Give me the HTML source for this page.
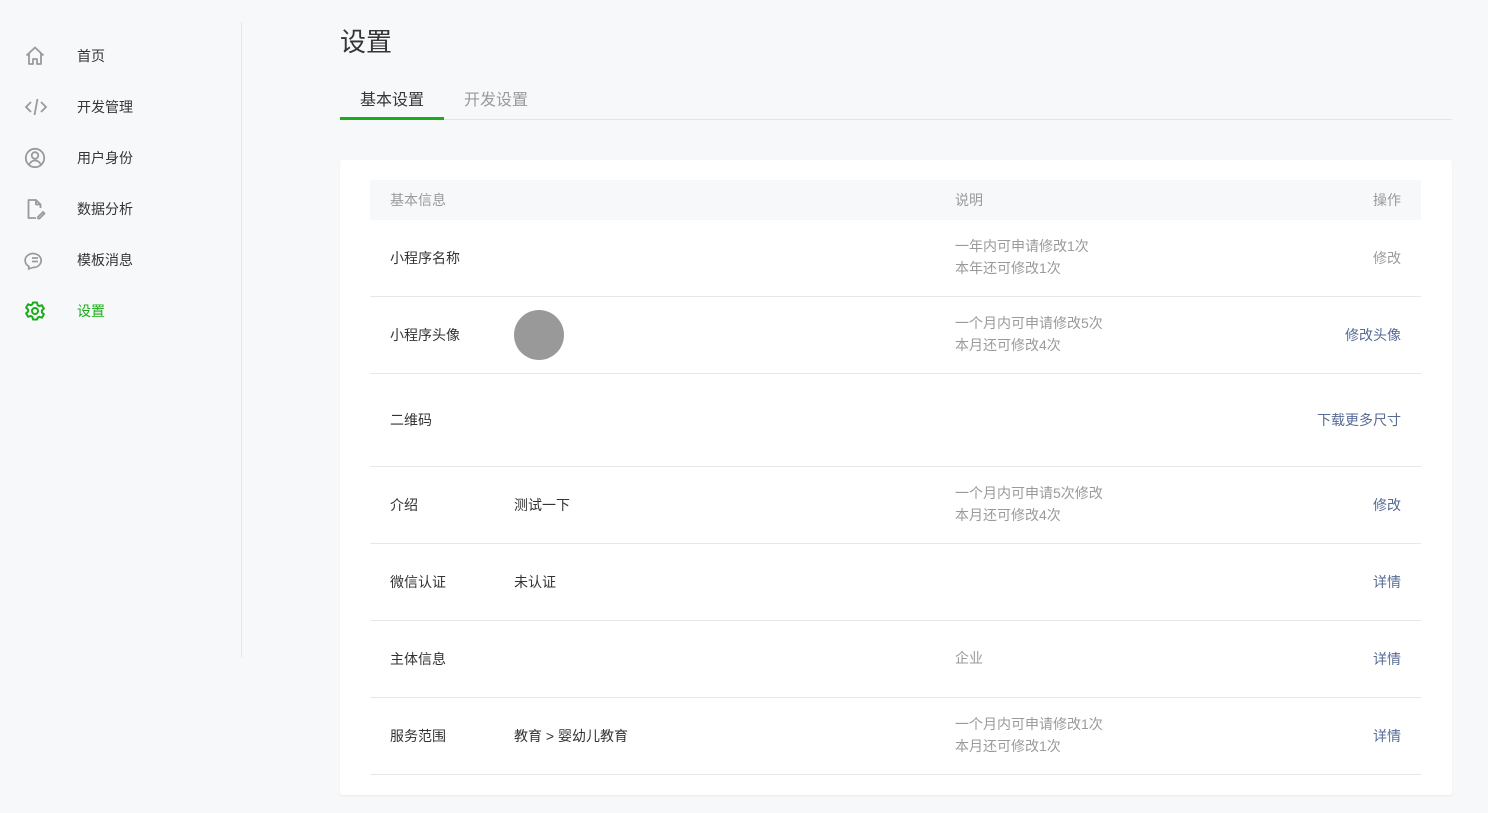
<!DOCTYPE html>
<html><head><meta charset="utf-8"><style>
*{margin:0;padding:0;box-sizing:border-box}
body{width:1488px;height:813px;background:#f7f8fa;font-family:"Liberation Sans","Noto Sans CJK SC",sans-serif;color:#333;position:relative;overflow:hidden;font-size:14px}
.nav{position:absolute;left:0;height:20px}
.nav svg{position:absolute;left:24px;top:-1px}
.nav span{position:absolute;left:77px;white-space:nowrap;font-size:14px;color:#353535;top:0}
.divider{position:absolute;left:241px;top:22px;width:1px;height:635px;background:#e4e6ea}
h1{position:absolute;left:340px;top:22px;font-size:26px;font-weight:normal;color:#353535}
.tabs{position:absolute;left:340px;top:86px;width:1112px;height:34px;border-bottom:1px solid #e2e4e7}
.tab{position:absolute;top:0;font-size:16px}
.card{position:absolute;left:340px;top:160px;width:1112px;height:635px;background:#fff;border-radius:3px;box-shadow:0 1px 2px rgba(0,0,0,.06)}
.row{position:absolute;left:30px;width:1051px;border-bottom:1px solid #e7e7e7}
.row div{position:absolute;white-space:nowrap}
.c1{left:20px}.c2{left:144px}.c3{left:585px;color:#9a9a9a;line-height:22px}.c4{right:20px;color:#576b95}
.hd{background:#f7f8fa;border:none;color:#9a9a9a}
</style></head><body>
<div class="divider"></div>
<div class="nav" style="top:46px"><svg width="22" height="22" viewBox="0 0 22 22" fill="none" stroke="#9a9a9a" stroke-width="1.8" stroke-linejoin="round"><path d="M2.5 10.5L11 2.5l8.5 8M5 8.5V19h4v-5h4v5h4V8.5"/></svg><span>首页</span></div>
<div class="nav" style="top:97px"><svg width="24" height="22" viewBox="0 0 24 22" fill="none" stroke="#9a9a9a" stroke-width="1.8"><path d="M7 6l-5 5 5 5M17 6l5 5-5 5M13.5 3l-3 16"/></svg><span>开发管理</span></div>
<div class="nav" style="top:148px"><svg width="22" height="22" viewBox="0 0 22 22" fill="none" stroke="#9a9a9a" stroke-width="1.8"><circle cx="11" cy="11" r="9.2"/><circle cx="11" cy="8.5" r="3.3"/><path d="M5.2 17.5c1.5-3 3.5-4 5.8-4s4.3 1 5.8 4"/></svg><span>用户身份</span></div>
<div class="nav" style="top:199px"><svg width="22" height="22" viewBox="0 0 22 22" fill="none" stroke="#9a9a9a" stroke-width="1.8" stroke-linejoin="round"><path d="M12 20H4.5V2h7.5l4.5 4.5V10M12 2v4.5h4.5M14 19l5-5 1.5 1.5-5 5H14z"/></svg><span>数据分析</span></div>
<div class="nav" style="top:250px"><svg width="22" height="22" viewBox="0 0 22 22" fill="none" stroke="#9a9a9a" stroke-width="1.7"><path d="M5 17.5A8 7 0 1 1 9 18.5L4.5 20z" stroke-linejoin="round"/><path d="M8 9h6M8 12.5h6"/></svg><span>模板消息</span></div>
<div class="nav" style="top:301px"><svg width="22" height="22" viewBox="0 0 22 22" fill="none" stroke="#1aad19" stroke-width="2" stroke-linejoin="round"><path d="M9 2.5h4l.6 2.6 1.8 1 2.5-.9 2 3.4-2 1.8v2.1l2 1.8-2 3.4-2.5-.9-1.8 1L13 19.5H9l-.6-2.6-1.8-1-2.5.9-2-3.4 2-1.8V9.5l-2-1.8 2-3.4 2.5.9 1.8-1z"/><circle cx="11" cy="11" r="3"/></svg><span style="color:#1aad19">设置</span></div>
<h1>设置</h1>
<div class="tabs">
<div class="tab" style="left:20px;color:#353535">基本设置</div>
<div class="tab" style="left:124px;color:#9a9a9a">开发设置</div>
<div style="position:absolute;left:0;bottom:-1px;width:104px;height:3px;background:#1aad19"></div>
</div>
<div class="card">
<div class="row hd" style="top:20px;height:40px"><div class="c1" style="top:10px">基本信息</div><div class="c3" style="top:9px">说明</div><div class="c4" style="top:10px;color:#9a9a9a">操作</div></div>
<div class="row" style="top:60px;height:77px"><div class="c1" style="top:28px">小程序名称</div><div class="c3" style="top:15px">一年内可申请修改1次<br>本年还可修改1次</div><div class="c4" style="top:28px;color:#9a9a9a">修改</div></div>
<div class="row" style="top:137px;height:77px"><div class="c1" style="top:28px">小程序头像</div><div style="left:144px;top:13px;width:50px;height:50px;border-radius:50%;background:#999"></div><div class="c3" style="top:15px">一个月内可申请修改5次<br>本月还可修改4次</div><div class="c4" style="top:28px">修改头像</div></div>
<div class="row" style="top:214px;height:93px"><div class="c1" style="top:36px">二维码</div><div class="c4" style="top:36px">下载更多尺寸</div></div>
<div class="row" style="top:307px;height:77px"><div class="c1" style="top:28px">介绍</div><div class="c2" style="top:28px">测试一下</div><div class="c3" style="top:15px">一个月内可申请5次修改<br>本月还可修改4次</div><div class="c4" style="top:28px">修改</div></div>
<div class="row" style="top:384px;height:77px"><div class="c1" style="top:28px">微信认证</div><div class="c2" style="top:28px">未认证</div><div class="c4" style="top:28px">详情</div></div>
<div class="row" style="top:461px;height:77px"><div class="c1" style="top:28px">主体信息</div><div class="c3" style="top:26px">企业</div><div class="c4" style="top:28px">详情</div></div>
<div class="row" style="top:538px;height:77px"><div class="c1" style="top:28px">服务范围</div><div class="c2" style="top:28px">教育 &gt; 婴幼儿教育</div><div class="c3" style="top:15px">一个月内可申请修改1次<br>本月还可修改1次</div><div class="c4" style="top:28px">详情</div></div>
</div>
</body></html>
